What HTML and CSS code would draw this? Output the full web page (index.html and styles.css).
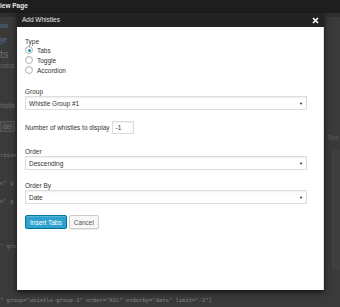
FILE: index.html
```html
<!DOCTYPE html>
<html lang="en">
<head>
  <meta charset="UTF-8" />
  <title>Add Whistles</title>
  <link rel="stylesheet" href="styles.css">
</head>
<body>
  <div class="topbar">iew Page</div>

  <div class="backdrop">
    <div class="bg-line bg-link">ew</div>
    <div class="bg-line bg-link bg-page">ge</div>
    <div class="bg-line bg-title">ts</div>
    <div class="bg-line bg-sub">ostra</div>
    <div class="bg-line bg-group">histle</div>
    <div class="bg-line bg-del"><span class="bg-btn">del</span></div>
    <div class="bg-code bg-c1">rdion"</div>
    <div class="bg-code bg-c2">e" g</div>
    <div class="bg-code bg-c3">e" g</div>
    <div class="bg-code bg-c4">" gro</div>
    <div class="bg-code bg-c5">" group="whistle-group-1" order="ASC" orderby="date" limit="-1"]</div>
    <div class="bg-side">Text</div>
    <div class="bg-panel"></div>
  </div>

  <div class="modal">
    <div class="modal-header">
      <span>Add Whistles</span>
      <svg class="modal-close" width="7" height="7" viewBox="0 0 7 7">
        <path d="M1 1 L6 6 M6 1 L1 6" stroke="#fff" stroke-width="1.6" />
      </svg>
    </div>
    <div class="modal-body">
      <label class="field-label">Type</label>
      <div class="radio-list">
        <div class="radio-row"><span class="radio checked"></span>Tabs</div>
        <div class="radio-row"><span class="radio"></span>Toggle</div>
        <div class="radio-row"><span class="radio"></span>Accordion</div>
      </div>

      <label class="field-label group-label">Group</label>
      <div class="select">Whistle Group #1<span class="arrow">&#9660;</span></div>

      <div class="number-row">
        <span>Number of whistles to display</span>
        <span class="num-input">-1</span>
      </div>

      <label class="field-label order-label">Order</label>
      <div class="select">Descending<span class="arrow">&#9660;</span></div>

      <label class="field-label orderby-label">Order By</label>
      <div class="select">Date<span class="arrow">&#9660;</span></div>

      <div class="buttons">
        <button class="btn-primary">Insert Tabs</button>
        <button class="btn">Cancel</button>
      </div>
    </div>
  </div>
</body>
</html>
```

FILE: styles.css
```css
* {
  box-sizing: border-box;
  margin: 0;
  padding: 0;
}
body {
  width: 340px;
  height: 307px;
  overflow: hidden;
  background: #393939;
  font-family: 'Liberation Sans', Arial, sans-serif;
  font-size: 6.5px;
  color: #333;
}
.topbar {
  height: 13px;
  background: #1e1e1e;
  color: #e6e6e6;
  font-size: 6.5px;
  font-weight: bold;
  line-height: 12px;
  white-space: nowrap;
}
.backdrop {
  height: 294px;
  background: #3a3a3a;
  border-top: 4px solid #2e2e2e;
  overflow: hidden;
  color: #6c6c6c;
  white-space: nowrap;
}
.bg-line {
  line-height: 10px;
  font-size: 6.5px;
}
.bg-link {
  margin-top: 4px;
  color: #55718a;
}
.bg-page {
  margin-top: 4px;
}
.bg-title {
  margin-top: 2px;
  font-size: 11px;
  line-height: 14px;
  color: #707070;
}
.bg-sub {
  color: #666;
}
.bg-group {
  margin-top: 30px;
}
.bg-del {
  margin-top: 10px;
}
.bg-btn {
  display: inline-block;
  border: 1px solid #555;
  background: #444;
  padding: 0 2px;
  line-height: 9px;
}
.bg-code {
  font-family: 'DejaVu Sans Mono', monospace;
  font-size: 5.5px;
  line-height: 8px;
  color: #777;
}
.bg-c1 {
  margin-top: 19px;
}
.bg-c2 {
  margin-top: 20px;
}
.bg-c3 {
  margin-top: 10px;
}
.bg-c4 {
  margin-top: 37px;
}
.bg-c5 {
  margin-top: 46px;
  color: #858585;
}
.bg-side {
  position: absolute;
  left: 327px;
  top: 134px;
  color: #5e5e5e;
}
.bg-panel {
  position: absolute;
  left: 330px;
  top: 150px;
  width: 10px;
  height: 120px;
  background: #3f3f3f;
  border-left: 1px solid #333;
}
.modal {
  position: absolute;
  left: 17px;
  top: 13px;
  width: 307px;
  z-index: 1;
  box-shadow: 0 2px 6px rgba(0, 0, 0, 0.7);
}
.modal-header {
  height: 14px;
  background: #222;
  color: #e8e8e8;
  font-size: 6.5px;
  line-height: 14px;
  padding: 0 5px;
  display: flex;
  justify-content: space-between;
  align-items: center;
}
.modal-close {
  display: block;
}
.modal-body {
  height: 263px;
  background: #fff;
  padding: 10px 16px 0 8px;
  border-right: 1px solid #ddd;
}
.field-label {
  display: block;
  line-height: 9px;
  color: #333;
}
.radio-list {
  margin-top: -1px;
}
.radio-row {
  display: flex;
  align-items: center;
  height: 10px;
  color: #333;
}
.radio {
  width: 8px;
  height: 8px;
  border: 1px solid #b4b4b4;
  border-radius: 50%;
  margin-right: 4px;
  display: flex;
  align-items: center;
  justify-content: center;
  box-shadow: inset 0 1px 1px rgba(0, 0, 0, 0.1);
}
.radio.checked::after {
  content: "";
  width: 3px;
  height: 3px;
  border-radius: 50%;
  background: #1e8cbe;
}
.group-label {
  margin-top: 12px;
}
.select {
  display: flex;
  align-items: center;
  justify-content: space-between;
  height: 14px;
  border: 1px solid #ddd;
  box-shadow: inset 0 1px 2px rgba(0, 0, 0, 0.07);
  padding: 0 3px;
  color: #333;
}
.arrow {
  font-size: 4px;
  color: #111;
}
.number-row {
  display: flex;
  align-items: center;
  gap: 2px;
  margin-top: 11px;
  color: #333;
}
.num-input {
  width: 22px;
  height: 13px;
  border: 1px solid #ddd;
  box-shadow: inset 0 1px 2px rgba(0, 0, 0, 0.07);
  padding-left: 3px;
  line-height: 11px;
}
.order-label {
  margin-top: 13px;
}
.orderby-label {
  margin-top: 11px;
}
.buttons {
  display: flex;
  gap: 2px;
  margin-top: 11px;
}
.buttons button {
  height: 14px;
  font-family: 'Liberation Sans', Arial, sans-serif;
  font-size: 6.5px;
  border-radius: 2px;
  padding: 0 4px;
  cursor: pointer;
}
.btn-primary {
  background: #2ea2cc;
  border: 1px solid #0074a2;
  color: #fff;
  box-shadow: inset 0 1px 0 rgba(120, 200, 230, 0.5);
}
.btn {
  background: #f7f7f7;
  border: 1px solid #ccc;
  color: #555;
  box-shadow: 0 1px 0 rgba(0, 0, 0, 0.08);
}
```
